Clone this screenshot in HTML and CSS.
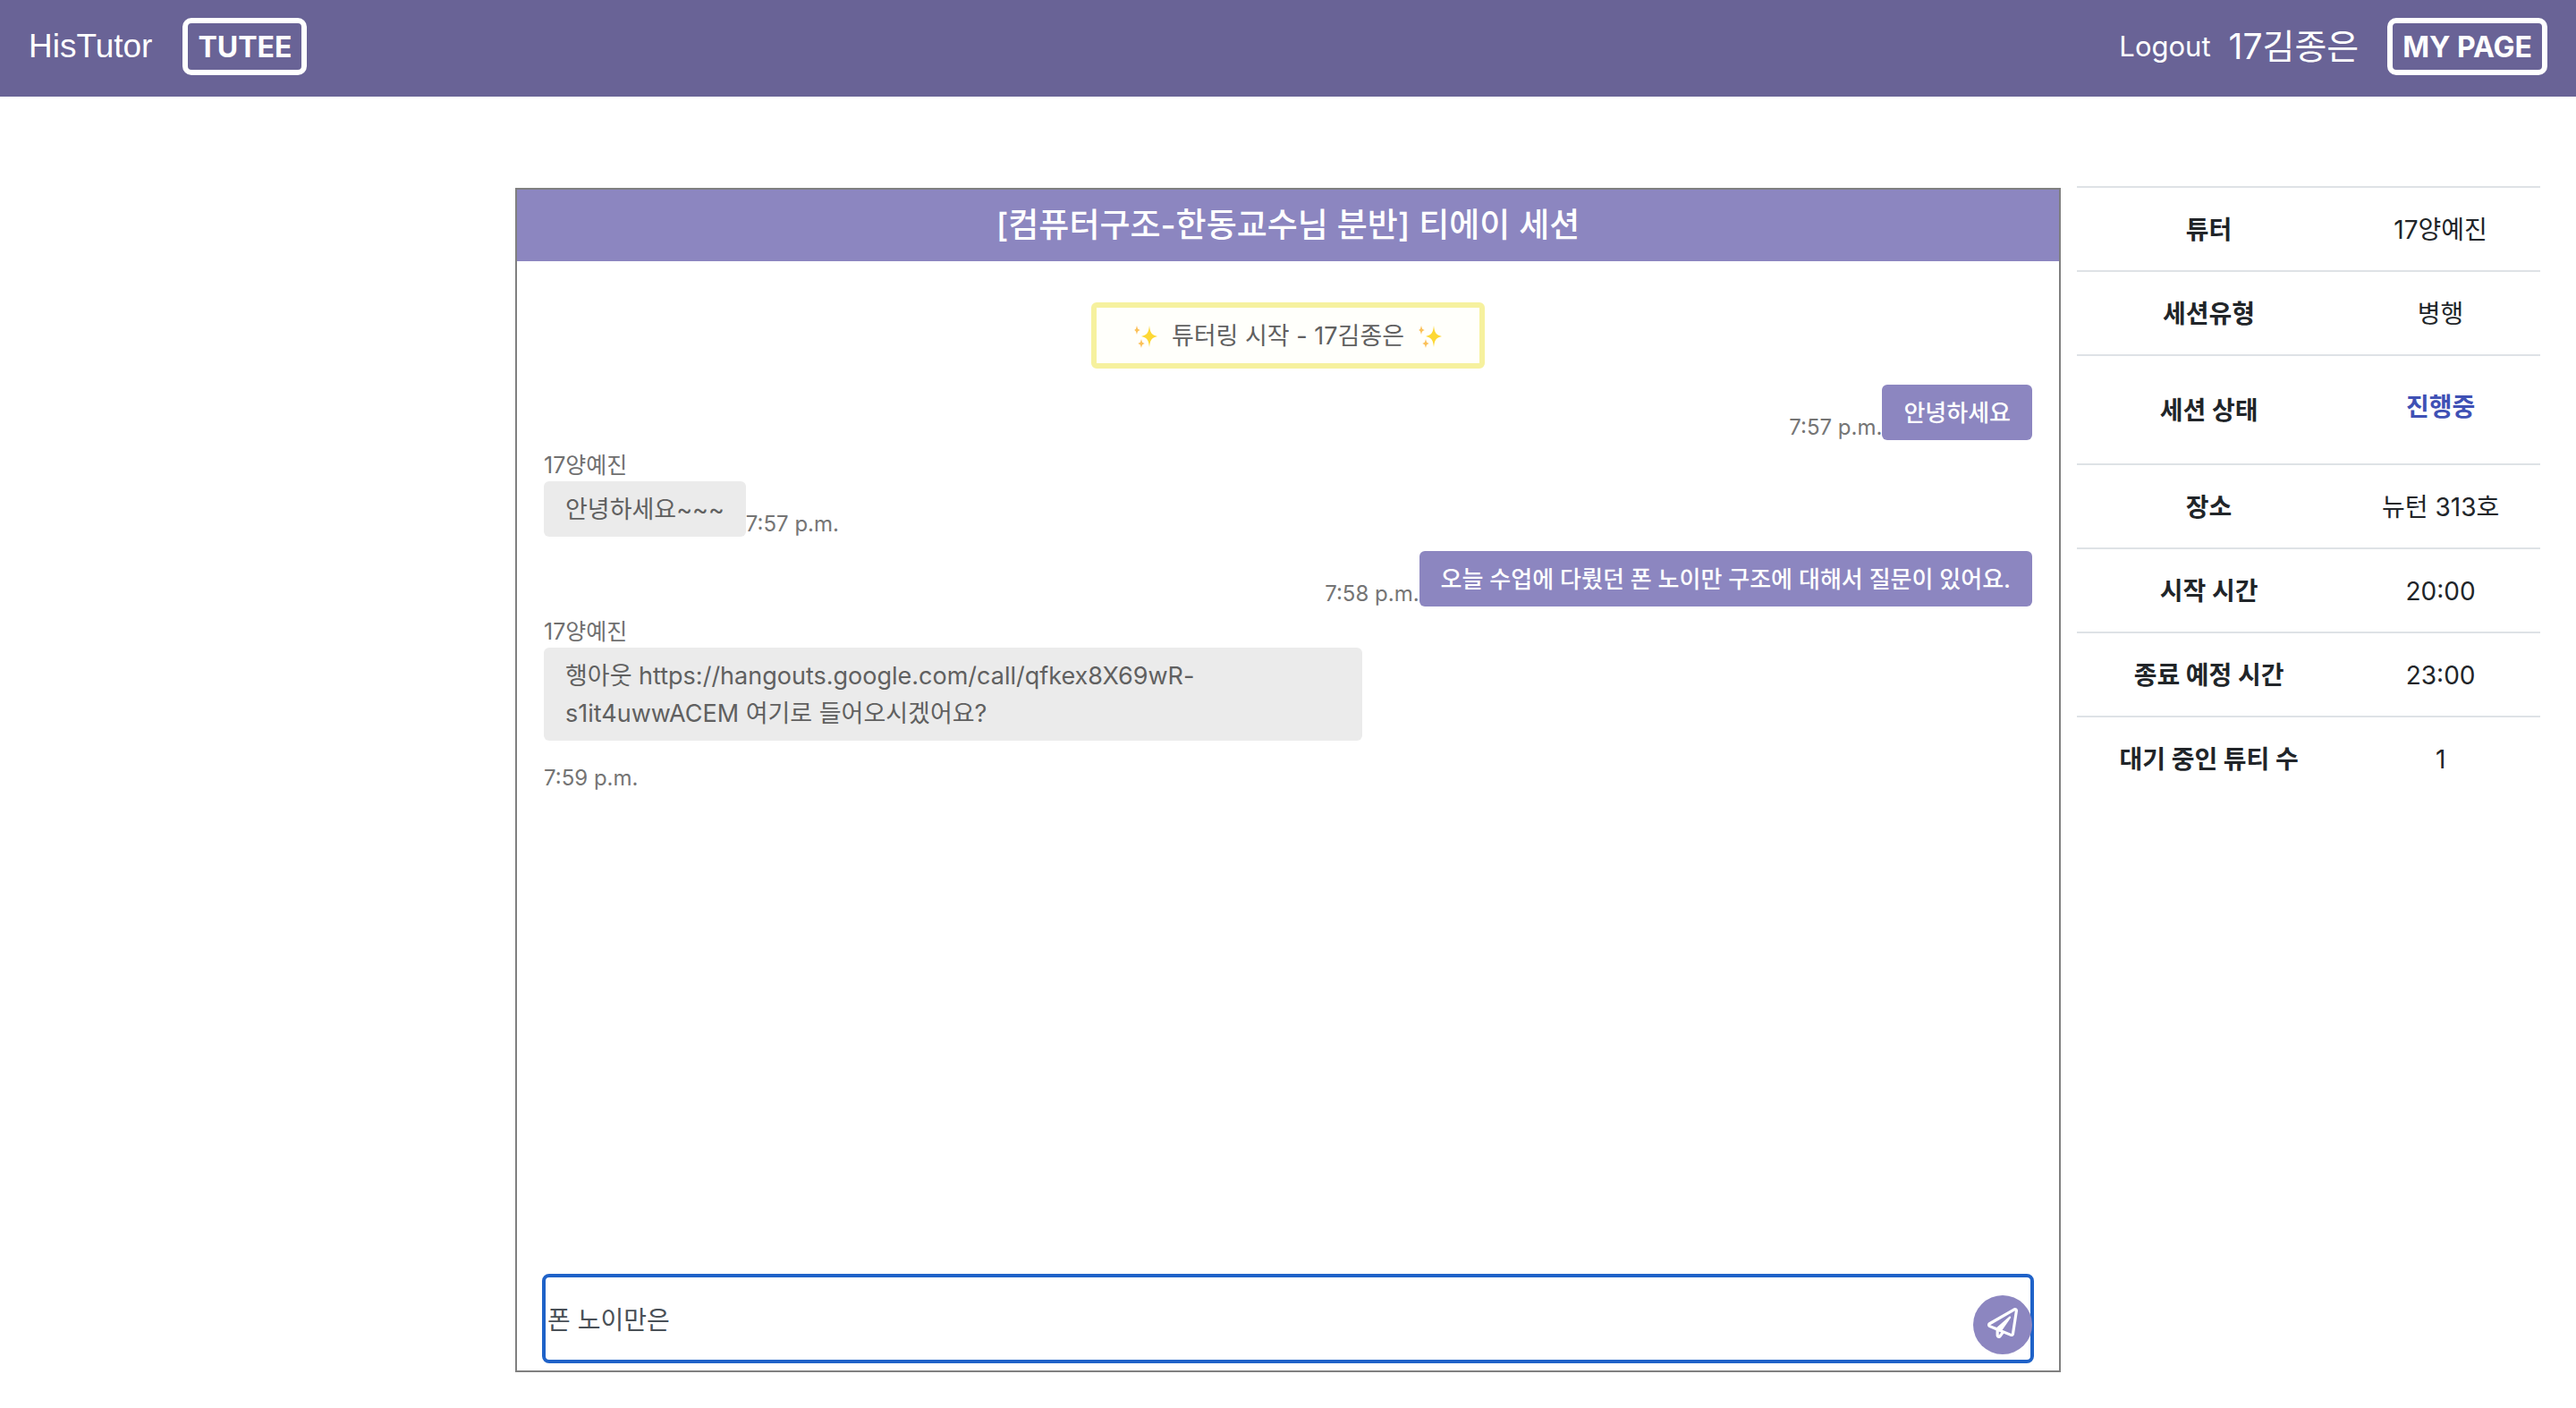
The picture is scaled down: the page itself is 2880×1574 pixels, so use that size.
FILE: index.html
```html
<!DOCTYPE html>
<html lang="ko">
<head>
<meta charset="utf-8">
<meta name="viewport" content="width=device-width, initial-scale=1">
<title>HisTutor</title>
<link rel="stylesheet" href="styles.css">
</head>
<body>
<svg class="defs" aria-hidden="true">
  <symbol id="sparkle" viewBox="0 0 26 26">
    <path class="star" d="M17 1 C18 9 19 11 26 13 C19 15 18 17 17 25 C16 17 15 15 8 13 C15 11 16 9 17 1Z"/>
    <path class="star-small" d="M3 1 C4 5 4 5 7 6 C4 7 4 7 3 11 C2 7 2 7 0 6 C2 5 2 5 3 1Z"/>
    <path class="star-small" d="M8 16 C9 20 9 20 12 21 C9 22 9 22 8 26 C7 22 7 22 4 21 C7 20 7 20 8 16Z"/>
  </symbol>
</svg>
<header class="navbar">
  <a class="brand" href="#">HisTutor</a>
  <button class="nav-button" type="button">TUTEE</button>
  <nav class="account">
    <a class="logout" href="#">Logout</a>
    <span class="username">17김종은</span>
    <button class="nav-button" type="button">MY PAGE</button>
  </nav>
</header>
<main class="layout">
  <section class="chat">
    <h1 class="chat-title">[컴퓨터구조-한동교수님 분반] 티에이 세션</h1>
    <div class="chat-body">
      <p class="notice">
        <svg class="sparkle" aria-hidden="true"><use href="#sparkle"/></svg>
        <span>튜터링 시작 - 17김종은</span>
        <svg class="sparkle" aria-hidden="true"><use href="#sparkle"/></svg>
      </p>
      <ol class="messages">
        <li class="message mine">
          <p class="bubble">안녕하세요</p>
          <time class="time">7:57 p.m.</time>
        </li>
        <li class="message">
          <span class="sender">17양예진</span>
          <p class="bubble">안녕하세요~~~</p>
          <time class="time">7:57 p.m.</time>
        </li>
        <li class="message mine">
          <p class="bubble">오늘 수업에 다뤘던 폰 노이만 구조에 대해서 질문이 있어요.</p>
          <time class="time">7:58 p.m.</time>
        </li>
        <li class="message">
          <span class="sender">17양예진</span>
          <p class="bubble">행아웃 https://hangouts.google.com/call/qfkex8X69wR-s1it4uwwACEM 여기로 들어오시겠어요?</p>
          <time class="time time-below">7:59 p.m.</time>
        </li>
      </ol>
      <form class="composer">
        <input class="composer-input" type="text" value="폰 노이만은" aria-label="메시지">
        <button class="send" type="button" aria-label="보내기">
          <svg class="send-icon" viewBox="0 0 512 512" aria-hidden="true"><path d="M440 6.500L24 246.400c-34.400 19.900-31.100 70.800 5.700 85.900L144 379.600V464c0 46.400 59.200 65.500 86.600 28.600l43.800-59.100 111.900 46.200c5.900 2.400 12.100 3.600 18.300 3.600 8.200 0 16.300-2.100 23.600-6.200 12.800-7.200 21.600-20 23.900-34.500l59.400-387.200c6.100-40.100-36.900-68.800-71.500-48.900zM192 464v-64.600l36.600 15.100L192 464zm212.600-28.700l-153.800-63.500L391 169.500c10.700-15.500-9.500-33.500-23.700-21.200L155.800 332.600 48 288 464 48l-59.400 387.300z"/></svg>
        </button>
      </form>
    </div>
  </section>
  <aside class="session">
    <table class="session-table">
      <tbody>
        <tr><th scope="row">튜터</th><td>17양예진</td></tr>
        <tr><th scope="row">세션유형</th><td>병행</td></tr>
        <tr><th scope="row">세션 상태</th><td><p class="status">진행중</p></td></tr>
        <tr><th scope="row">장소</th><td>뉴턴 313호</td></tr>
        <tr><th scope="row">시작 시간</th><td>20:00</td></tr>
        <tr><th scope="row">종료 예정 시간</th><td>23:00</td></tr>
        <tr><th scope="row">대기 중인 튜티 수</th><td>1</td></tr>
      </tbody>
    </table>
  </aside>
</main>
</body>
</html>
```
FILE: styles.css
```css
* { box-sizing: border-box; }

body {
  margin: 0;
  min-height: 100vh;
  display: flex;
  flex-direction: column;
  background: #fff;
  color: #212529;
  font-family: Inter, "Noto Sans CJK KR", sans-serif;
  font-size: 28px;
  line-height: 42px;
}

p, h1, ol { margin: 0; padding: 0; }
ol { list-style: none; }
a { color: inherit; text-decoration: none; }
button, input { font: inherit; }

.defs { position: absolute; width: 0; height: 0; }
.star { fill: #fdd835; }
.star-small { fill: #fbc15a; }

/* Top bar */
.navbar {
  display: flex;
  align-items: center;
  padding: 20px 32px 24px;
  background: #696396;
  color: #fff;
}
.brand {
  margin-right: 34px;
  font-family: "Liberation Sans", sans-serif;
  font-size: 37px;
}
.account {
  display: flex;
  align-items: center;
  margin-left: auto;
}
.logout { margin-right: 20px; font-size: 31px; }
.username { margin-right: 32px; font-size: 39px; }
.nav-button {
  height: 64px;
  padding: 2px 11px 0;
  border: 6px solid #fff;
  border-radius: 10px;
  background: transparent;
  color: #fff;
  font-size: 32px;
  font-weight: 700;
}

/* Page columns */
.layout {
  flex: 1;
  display: grid;
  grid-template-columns: 60% 20%;
  justify-content: end;
  padding: 100px 0 40px;
}

/* Chat panel */
.chat {
  display: flex;
  flex-direction: column;
  margin-top: 2px;
  border: 2px solid #808080;
}
.chat-title {
  padding: 16px;
  background: #8c86c0;
  color: #fff;
  font-size: 37px;
  font-weight: 500;
  line-height: 48px;
  text-align: center;
}
.chat-body {
  flex: 1;
  display: flex;
  flex-direction: column;
  padding: 46px 30px 8px;
  color: #606060;
  font-size: 27px;
}
.notice {
  align-self: center;
  display: flex;
  align-items: center;
  gap: 16px;
  padding: 11px 42px 9px;
  border: 6px solid #f6f19e;
  border-radius: 6px;
  background: #fffffb;
}
.sparkle { width: 26px; height: 26px; }
.messages {
  flex: 1;
  display: flex;
  flex-direction: column;
  gap: 16px;
  padding-top: 18px;
}
.message {
  display: flex;
  flex-wrap: wrap;
  align-items: flex-end;
}
.mine { flex-direction: row-reverse; }
.sender {
  width: 100%;
  padding-bottom: 6px;
  color: #707070;
  font-size: 25px;
  line-height: 24px;
}
.bubble {
  max-width: 55%;
  padding: 11px 24px 9px;
  border-radius: 6px;
  background: #ebebeb;
}
.mine .bubble {
  background: #8c86c0;
  color: #fff;
  font-size: 26px;
  font-weight: 500;
}
.time {
  color: #757575;
  font-size: 24px;
  line-height: 28px;
}
.time-below { width: 100%; margin-top: 28px; }

.composer {
  position: relative;
  display: flex;
}
.composer-input {
  flex: 1;
  height: 100px;
  margin: 0 -2px;
  padding: 0 2px;
  border: 4px solid #1f62c8;
  border-radius: 8px;
  outline: 0;
  background: #fff;
  color: #495057;
  font-size: 28px;
}
.send {
  position: absolute;
  right: 0;
  bottom: 10px;
  display: grid;
  place-items: center;
  width: 66px;
  height: 66px;
  padding: 0 0 4px;
  border: 0;
  border-radius: 50%;
  background: #8c86c0;
}
.send-icon { width: 34px; height: 34px; fill: #fff; }

/* Session details */
.session { padding: 0 40px 0 18px; }
.session-table {
  width: 100%;
  border-collapse: collapse;
  table-layout: fixed;
  text-align: center;
}
.session-table th, .session-table td {
  padding: 26px 0 24px;
  border-top: 2px solid #dee2e6;
}
.session-table th { width: 57%; font-weight: 700; }
.status { margin: 10px 0 18px; color: #3f51b5; font-weight: 700; }
```
